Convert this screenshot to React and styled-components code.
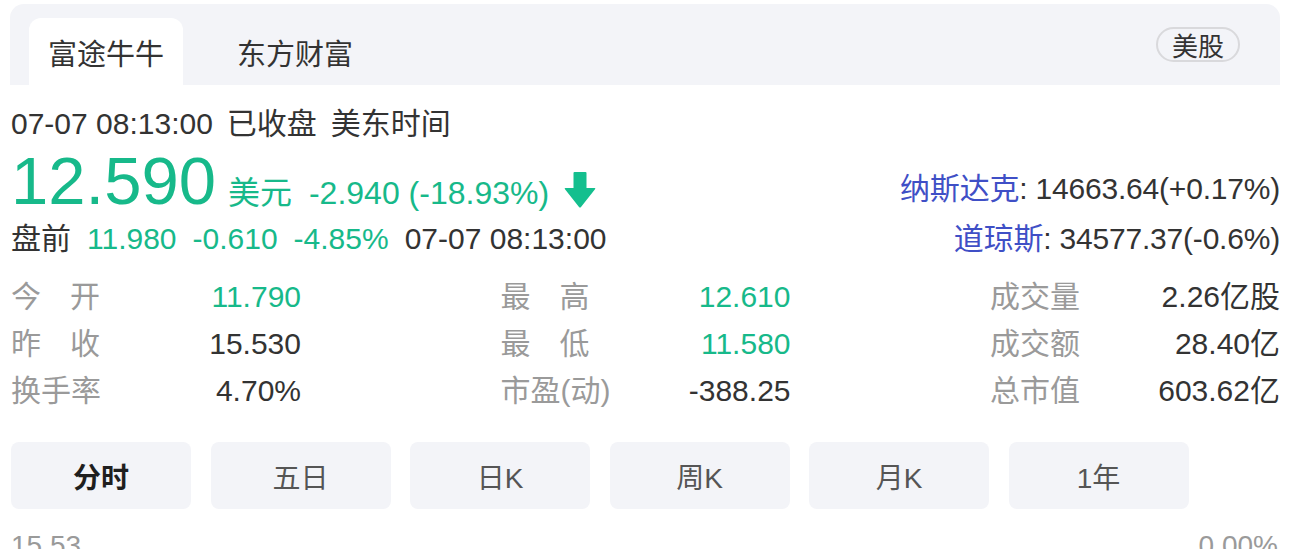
import React from "react";
import styled, { createGlobalStyle } from "styled-components";

const GREEN = "#17b98a";
const DARK = "#333333";
const GRAY = "#9a9a9a";
const BLUE = "#3f4fc6";
const PANEL = "#f3f4f8";

const Global = createGlobalStyle`
  html, body { margin: 0; padding: 0; background: #ffffff; }
  body {
    font-family: "Liberation Sans", Arial, "Noto Sans CJK SC", sans-serif;
    color: ${DARK};
    overflow: hidden;
  }
`;

const Page = styled.div`
  padding: 0 13px 0 10px;
  width: 1293px;
  box-sizing: border-box;
`;

const TabBar = styled.div`
  margin-top: 4px;
  height: 81px;
  background: ${PANEL};
  border-radius: 14px 14px 0 0;
  display: flex;
  align-items: flex-end;
  padding: 0 40px 0 19px;
  gap: 35px;
`;

const Tab = styled.div`
  height: 67px;
  padding: 0 19px;
  display: flex;
  align-items: center;
  font-size: 29px;
  color: ${DARK};
  background: ${(p) => (p.$active ? "#ffffff" : "transparent")};
  border-radius: 12px 12px 0 0;
`;

const MarketBadge = styled.div`
  margin-left: auto;
  align-self: center;
  width: 84px;
  height: 35px;
  box-sizing: border-box;
  border: 2px solid #d9d9dc;
  border-radius: 18px;
  display: flex;
  align-items: center;
  justify-content: center;
  font-size: 26px;
  color: ${DARK};
`;

const Content = styled.div`
  padding-left: 1px;
`;

const TimeRow = styled.div`
  margin-top: 19px;
  display: flex;
  gap: 14px;
  font-size: 30px;
  line-height: 40px;
  color: ${DARK};
`;

const QuoteRow = styled.div`
  display: flex;
  justify-content: space-between;
  align-items: baseline;
  margin-top: ${(p) => p.$mt || 0}px;
`;

const PriceGroup = styled.div`
  display: flex;
  align-items: baseline;
  color: ${GREEN};
`;

const BigPrice = styled.span`
  font-size: 67px;
  line-height: 66px;
`;

const Unit = styled.span`
  font-size: 32px;
  margin-left: 12px;
`;

const Change = styled.span`
  font-size: 32px;
  margin-left: 17px;
`;

const Arrow = styled.svg`
  width: 32px;
  height: 36px;
  margin-left: 15px;
  align-self: flex-end;
  margin-bottom: 6px;
`;

const IndexLine = styled.div`
  font-size: 30px;
  line-height: 40px;
  color: ${DARK};
  white-space: nowrap;
  letter-spacing: -0.2px;
`;

const TopIndexLine = styled(IndexLine)`
  align-self: flex-start;
  margin-top: 21px;
`;

const IndexName = styled.span`
  color: ${BLUE};
`;

const PreMarket = styled.div`
  display: flex;
  gap: 16px;
  font-size: 30px;
  line-height: 40px;
`;

const Piece = styled.span`
  color: ${(p) => (p.$green ? GREEN : DARK)};
`;

const StatsGrid = styled.div`
  margin-top: 14px;
  display: grid;
  grid-template-columns: repeat(3, 290px);
  justify-content: space-between;
  font-size: 30px;
  line-height: 47px;
`;

const StatCell = styled.div`
  display: flex;
  justify-content: space-between;
  white-space: nowrap;
`;

const StatLabel = styled.span`
  display: inline-block;
  min-width: 89px;
  text-align: justify;
  text-align-last: justify;
  color: ${GRAY};
`;

const StatValue = styled.span`
  color: ${(p) => (p.$green ? GREEN : DARK)};
`;

const PeriodBar = styled.div`
  margin-top: 28px;
  display: flex;
  gap: 19.5px;
`;

const PeriodButton = styled.div`
  width: 180px;
  height: 67px;
  border-radius: 8px;
  background: ${PANEL};
  display: flex;
  align-items: center;
  justify-content: center;
  font-size: 28px;
  font-weight: ${(p) => (p.$active ? 700 : 400)};
  color: ${(p) => (p.$active ? "#1f1f1f" : "#555555")};
`;

const AxisRow = styled.div`
  margin-top: 22px;
  display: flex;
  justify-content: space-between;
  font-size: 28px;
  line-height: 30px;
  color: ${GRAY};
  padding-right: 2px;
`;

const stats = [
  ["今开", "11.790", true],
  ["最高", "12.610", true],
  ["成交量", "2.26亿股", false],
  ["昨收", "15.530", false],
  ["最低", "11.580", true],
  ["成交额", "28.40亿", false],
  ["换手率", "4.70%", false],
  ["市盈(动)", "-388.25", false],
  ["总市值", "603.62亿", false],
];

const periods = ["分时", "五日", "日K", "周K", "月K", "1年"];

export default function App() {
  return (
    <Page>
      <Global />
      <TabBar>
        <Tab $active>富途牛牛</Tab>
        <Tab>东方财富</Tab>
        <MarketBadge>美股</MarketBadge>
      </TabBar>
      <Content>
        <TimeRow>
          <span>07-07 08:13:00</span>
          <span>已收盘</span>
          <span>美东时间</span>
        </TimeRow>
        <QuoteRow $mt={4}>
          <PriceGroup>
            <BigPrice>12.590</BigPrice>
            <Unit>美元</Unit>
            <Change>-2.940 (-18.93%)</Change>
            <Arrow viewBox="0 0 32 36">
              <path
                d="M9.5 1 Q9.5 0 10.5 0 H21.5 Q22.5 0 22.5 1 V16 H30.5 Q32 16 31 17.3 L17 35 Q16 36 15 35 L1 17.3 Q0 16 1.5 16 H9.5 Z"
                fill="#14bf8e"
              />
            </Arrow>
          </PriceGroup>
          <TopIndexLine>
            <IndexName>纳斯达克</IndexName>: 14663.64(+0.17%)
          </TopIndexLine>
        </QuoteRow>
        <QuoteRow $mt={5}>
          <PreMarket>
            <Piece>盘前</Piece>
            <Piece $green>11.980</Piece>
            <Piece $green>-0.610</Piece>
            <Piece $green>-4.85%</Piece>
            <Piece>07-07 08:13:00</Piece>
          </PreMarket>
          <IndexLine>
            <IndexName>道琼斯</IndexName>: 34577.37(-0.6%)
          </IndexLine>
        </QuoteRow>
        <StatsGrid>
          {stats.map(([label, value, green]) => (
            <StatCell key={label}>
              <StatLabel>{label}</StatLabel>
              <StatValue $green={green}>{value}</StatValue>
            </StatCell>
          ))}
        </StatsGrid>
        <PeriodBar>
          {periods.map((p, i) => (
            <PeriodButton key={p} $active={i === 0}>
              {p}
            </PeriodButton>
          ))}
        </PeriodBar>
        <AxisRow>
          <span>15.53</span>
          <span>0.00%</span>
        </AxisRow>
      </Content>
    </Page>
  );
}
